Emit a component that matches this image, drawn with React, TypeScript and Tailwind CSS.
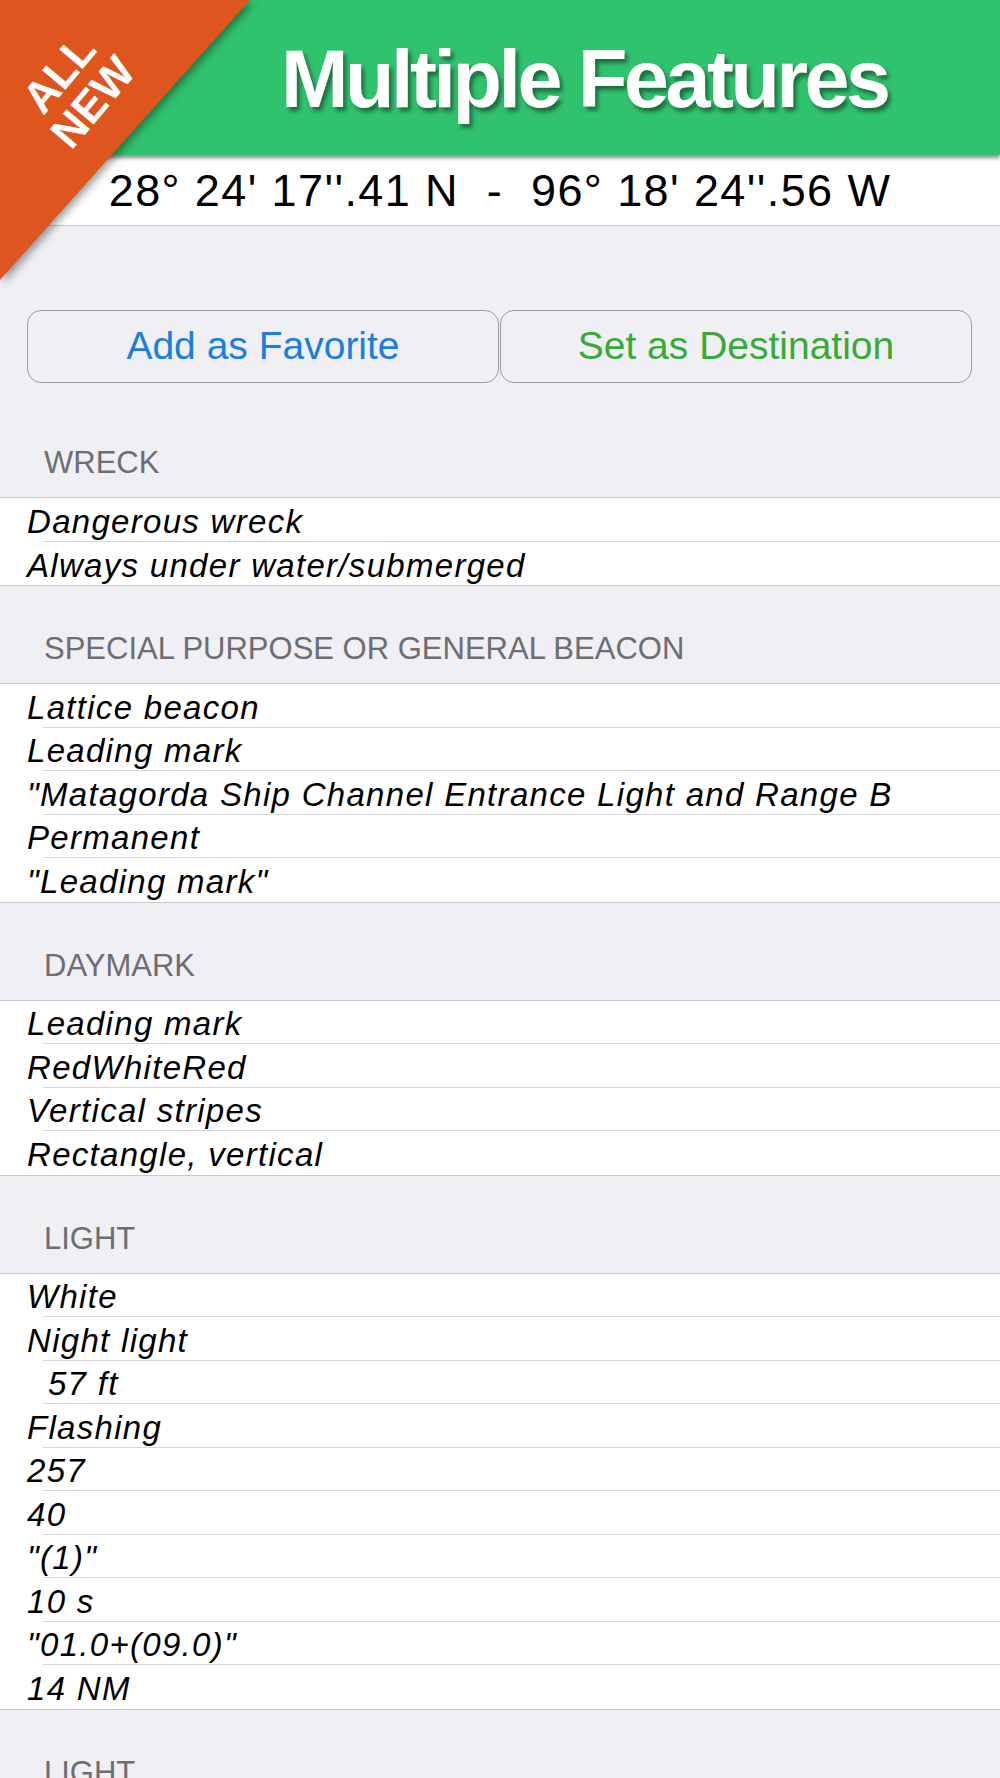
import React from "react";

type Section = { title: string; rows: string[] };

const sections: Section[] = [
  { title: "WRECK", rows: ["Dangerous wreck", "Always under water/submerged"] },
  {
    title: "SPECIAL PURPOSE OR GENERAL BEACON",
    rows: [
      "Lattice beacon",
      "Leading mark",
      "\"Matagorda Ship Channel Entrance Light and Range B",
      "Permanent",
      "\"Leading mark\"",
    ],
  },
  {
    title: "DAYMARK",
    rows: ["Leading mark", "RedWhiteRed", "Vertical stripes", "Rectangle, vertical"],
  },
  {
    title: "LIGHT",
    rows: [
      "White",
      "Night light",
      "  57 ft",
      "Flashing",
      "257",
      "40",
      "\"(1)\"",
      "10 s",
      "\"01.0+(09.0)\"",
      "14 NM",
    ],
  },
  { title: "LIGHT", rows: ["White", "Night light", "  57 ft"] },
];

function SectionBlock({ section }: { section: Section }) {
  return (
    <section>
      <div className="flex h-[97px] items-end pb-[19px] pl-[44px] text-[31px] leading-[31px] text-[#6d6d72]">
        {section.title}
      </div>
      <ul className="border-y border-[#c8c7cc] bg-white">
        {section.rows.map((row, i) => (
          <li key={i} className="flex h-[43.5px] flex-col overflow-hidden">
            <div className="flex min-h-0 flex-1 items-center whitespace-pre pl-[27px] pt-[5px] text-[33px] leading-[36px] italic tracking-[1.3px] text-black">
              {row}
            </div>
            {i < section.rows.length - 1 && (
              <div className="ml-[43px] h-px shrink-0 bg-[#d6d6da]" />
            )}
          </li>
        ))}
      </ul>
    </section>
  );
}

export default function App() {
  return (
    <div
      className="relative h-[1778px] w-[1000px] overflow-hidden bg-[#efeff4]"
      style={{ fontFamily: '"Liberation Sans", Arial, sans-serif' }}
    >
      <header className="relative z-10 flex h-[155px] items-center bg-[#30c36e] pl-[281px] pt-[4px] shadow-[0_3px_4px_rgba(0,0,0,0.45)]">
        <h1 className="text-[81px] font-bold leading-none tracking-[-3.5px] text-white [text-shadow:3px_4px_4px_rgba(0,0,0,0.45)]">
          Multiple Features
        </h1>
      </header>

      <div className="flex h-[71px] items-center justify-center border-b border-[#c8c7cc] bg-white pt-[2px] text-[45px] tracking-[1.4px] whitespace-pre text-black">
        28° 24' 17''.41 N  -  96° 18' 24''.56 W
      </div>

      <div className="mt-[84px] flex pl-[27px]">
        <button className="flex h-[73px] w-[472px] items-center justify-center rounded-[14px] border-[1.5px] border-[#9c9ca0] text-[39px] text-[#1a7ee0]">
          Add as Favorite
        </button>
        <button className="ml-px flex h-[73px] w-[472px] items-center justify-center rounded-[14px] border-[1.5px] border-[#9c9ca0] text-[39px] text-[#38aa3a]">
          Set as Destination
        </button>
      </div>

      <div className="mt-[17px]">
        {sections.map((s, i) => (
          <SectionBlock key={i} section={s} />
        ))}
      </div>

      {/* ALL NEW corner ribbon */}
      <div className="absolute left-0 top-0 z-20">
        <svg width="270" height="300" className="drop-shadow-[3px_3px_4px_rgba(0,0,0,0.4)]">
          <polygon points="0,0 250,0 0,280" fill="#de551e" />
        </svg>
        <div className="absolute left-[76px] top-[88px] -translate-x-1/2 -translate-y-1/2 -rotate-[50deg] text-center text-[44px] font-bold leading-[44px] text-white">
          <div>ALL</div>
          <div>NEW</div>
        </div>
      </div>
    </div>
  );
}
